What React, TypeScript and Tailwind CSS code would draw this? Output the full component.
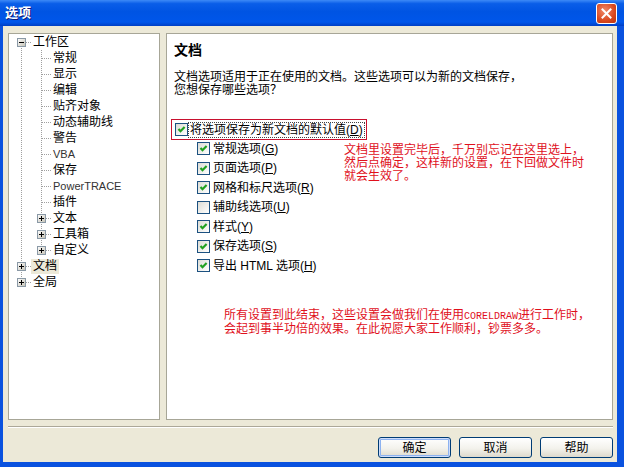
import React from "react";

type Conn = "first" | "mid" | "last";

interface TreeRow {
  label: string;
  level: 0 | 1;
  conn: Conn;
  box?: "+" | "-";
  latin?: boolean;
  selected?: boolean;
}

const rows: TreeRow[] = [
  { label: "工作区", level: 0, conn: "first", box: "-" },
  { label: "常规", level: 1, conn: "mid" },
  { label: "显示", level: 1, conn: "mid" },
  { label: "编辑", level: 1, conn: "mid" },
  { label: "贴齐对象", level: 1, conn: "mid" },
  { label: "动态辅助线", level: 1, conn: "mid" },
  { label: "警告", level: 1, conn: "mid" },
  { label: "VBA", level: 1, conn: "mid", latin: true },
  { label: "保存", level: 1, conn: "mid" },
  { label: "PowerTRACE", level: 1, conn: "mid", latin: true },
  { label: "插件", level: 1, conn: "mid" },
  { label: "文本", level: 1, conn: "mid", box: "+" },
  { label: "工具箱", level: 1, conn: "mid", box: "+" },
  { label: "自定义", level: 1, conn: "last", box: "+" },
  { label: "文档", level: 0, conn: "mid", box: "+", selected: true },
  { label: "全局", level: 0, conn: "last", box: "+" },
];

const options = [
  { text: "常规选项", key: "G", on: true },
  { text: "页面选项", key: "P", on: true },
  { text: "网格和标尺选项", key: "R", on: true },
  { text: "辅助线选项", key: "U", on: false },
  { text: "样式", key: "Y", on: true },
  { text: "保存选项", key: "S", on: true },
  { text: "导出 HTML 选项", key: "H", on: true },
];

// one 20x16 connector cell of the tree view
function TreeCell({ kind, box }: { kind: "pass" | Conn; box?: "+" | "-" }) {
  const dot = { stroke: "#a0a0a0", strokeDasharray: "1 1", shapeRendering: "crispEdges" as const };
  return (
    <svg width="20" height="16" viewBox="0 0 20 16" className="shrink-0">
      {kind === "pass" && <line x1="10.5" y1="0" x2="10.5" y2="16" {...dot} />}
      {kind === "mid" && <line x1="10.5" y1="0" x2="10.5" y2="16" {...dot} />}
      {kind === "last" && <line x1="10.5" y1="0" x2="10.5" y2="8" {...dot} />}
      {kind === "first" && <line x1="10.5" y1="8" x2="10.5" y2="16" {...dot} />}
      {kind !== "pass" && <line x1="11" y1="8.5" x2="20" y2="8.5" {...dot} />}
      {box && (
        <g shapeRendering="crispEdges">
          <defs>
            <linearGradient id="tbx" x1="0" y1="0" x2="1" y2="1">
              <stop offset="0" stopColor="#ffffff" />
              <stop offset="1" stopColor="#c4c1b4" />
            </linearGradient>
          </defs>
          <rect x="6.5" y="4.5" width="8" height="8" fill="url(#tbx)" stroke="#8a99a6" />
          <line x1="8" y1="8.5" x2="13" y2="8.5" stroke="#000" />
          {box === "+" && <line x1="10.5" y1="6" x2="10.5" y2="11" stroke="#000" />}
        </g>
      )}
    </svg>
  );
}

function Check({ on }: { on: boolean }) {
  return (
    <span className="flex h-[13px] w-[13px] shrink-0 items-center justify-center border border-[#1c5180] bg-[linear-gradient(135deg,#dcdcd5,#ffffff)]">
      {on && (
        <svg width="11" height="11" viewBox="0 0 11 11">
          <path d="M2.5 5 L4.5 7.2 L8.6 3" fill="none" stroke="#21a121" strokeWidth="2.2" />
        </svg>
      )}
    </span>
  );
}

function Label({ text, k }: { text: string; k: string }) {
  return (
    <span className="whitespace-nowrap">
      {text}(<span className="underline">{k}</span>)
    </span>
  );
}

function XPButton({ children, primary }: { children: React.ReactNode; primary?: boolean }) {
  return (
    <button
      className={
        "h-[21px] w-[73px] rounded-[3px] border border-[#003c74] bg-[linear-gradient(to_bottom,#ffffff,#f3f2ec_55%,#ddd9cc)] text-[12px] text-black " +
        (primary ? "shadow-[inset_0_0_0_1px_#cddcfb,inset_0_0_0_2px_#8db2f0]" : "")
      }
    >
      {children}
    </button>
  );
}

export default function App() {
  return (
    <div className="flex h-[467px] w-[624px] flex-col overflow-hidden font-['Liberation_Sans','Noto_Sans_CJK_SC',sans-serif] text-[12px] text-black">
      {/* Title bar */}
      <div className="flex h-[26px] shrink-0 items-center justify-between bg-[linear-gradient(to_bottom,#3d8af7_0%,#0a5ee8_14%,#0054e3_45%,#0056ea_85%,#003fc4_100%)] pl-[5px] pr-[7px]">
        <span className="text-[13px] font-bold text-white [text-shadow:1px_1px_0_#0f1c7a]">选项</span>
        <span className="flex h-[21px] w-[21px] items-center justify-center rounded-[3px] border border-white bg-[radial-gradient(circle_at_40%_35%,#f08a6a,#d9481f_60%,#b8340f)]">
          <svg width="13" height="13" viewBox="0 0 13 13">
            <path d="M2.5 2.5 L10.5 10.5 M10.5 2.5 L2.5 10.5" stroke="#fff" strokeWidth="2" strokeLinecap="square" />
          </svg>
        </span>
      </div>

      {/* Body */}
      <div className="flex flex-1 flex-col border-b-[5px] border-l-[3px] border-r-[7px] border-[#0a52df] bg-[#ece9d8] pl-[5px] pr-[4px] pt-[7px]">
        <div className="flex h-[387px] gap-[6px]">
          {/* Tree */}
          <div className="w-[152px] shrink-0 border border-[#a7a697] bg-white pl-[2px]">
            {rows.map((r) => (
              <div key={r.label} className="flex h-[16px] items-center">
                {r.level === 1 && <TreeCell kind="pass" />}
                <TreeCell kind={r.conn} box={r.box} />
                <span
                  className={
                    "px-[2px] leading-[15px] whitespace-nowrap " +
                    (r.latin ? "text-[11px] text-[#333] " : "") +
                    (r.selected ? "bg-[#ece9d8]" : "")
                  }
                >
                  {r.label}
                </span>
              </div>
            ))}
          </div>

          {/* Page */}
          <div className="flex flex-1 flex-col border border-[#a7a697] bg-white">
            <div className="ml-[7px] mt-[8px] text-[14px] font-bold leading-[16px]">文档</div>
            <p className="ml-[7px] mt-[13px] leading-[13px]">
              文档选项适用于正在使用的文档。这些选项可以为新的文档保存，
              <br />
              您想保存哪些选项？
            </p>

            <div className="ml-[4px] mt-[22px] flex h-[21px] w-[196px] items-center border border-[#c8102e] pl-[3px]">
              <Check on />
              <span className="whitespace-nowrap border border-dotted border-[#444] px-[1px] leading-[14px]">
                <Label text="将选项保存为新文档的默认值" k="D" />
              </span>
            </div>

            <div className="-mt-px flex items-start">
              <div className="ml-[30px] flex w-[147px] shrink-0 flex-col">
                {options.map((o) => (
                  <div key={o.key} className="flex h-[19.5px] items-center gap-[3px] whitespace-nowrap">
                    <Check on={o.on} />
                    <Label text={o.text} k={o.key} />
                  </div>
                ))}
              </div>
              <p className="mt-[5px] whitespace-nowrap leading-[13px] text-[#e0101c]">
                文档里设置完毕后，千万别忘记在这里选上，
                <br />
                然后点确定，这样新的设置，在下回做文件时
                <br />
                就会生效了。
              </p>
            </div>

            <p className="ml-[57px] mt-[33px] whitespace-nowrap leading-[12px] text-[#e0101c]">
              所有设置到此结束，这些设置会做我们在使用
              <span className="font-['Liberation_Mono',monospace] text-[10px]">CORELDRAW</span>
              进行工作时，
              <br />
              会起到事半功倍的效果。在此祝愿大家工作顺利，钞票多多。
            </p>
          </div>
        </div>

        {/* Separator */}
        <div className="mt-[6px] h-[2px] border-b border-t border-b-white border-t-[#aca899]" />

        {/* Buttons */}
        <div className="mt-[9px] flex justify-end gap-[8px]">
          <XPButton primary>确定</XPButton>
          <XPButton>取消</XPButton>
          <XPButton>帮助</XPButton>
        </div>
      </div>
    </div>
  );
}
